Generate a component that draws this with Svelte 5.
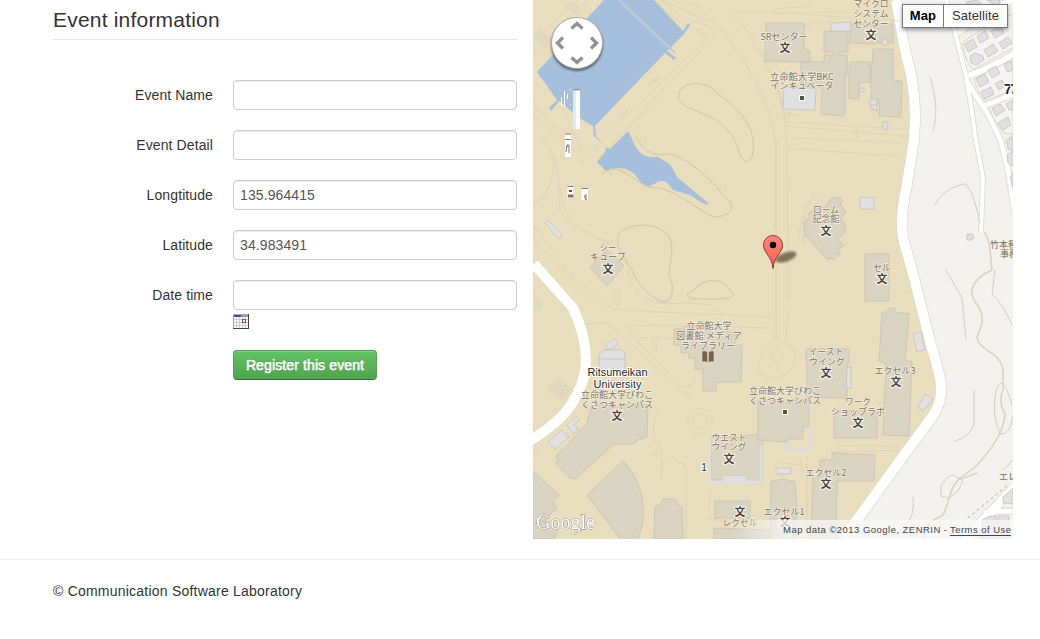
<script>
  const fields = [
    { id: 'name', label: 'Event Name', value: '' },
    { id: 'detail', label: 'Event Detail', value: '' },
    { id: 'lng', label: 'Longtitude', value: '135.964415' },
    { id: 'lat', label: 'Latitude', value: '34.983491' },
    { id: 'date', label: 'Date time', value: '' }
  ];

  // Campus buildings, as polygon point lists
  const halls = [
    '766,23 804,23 804,50 810,50 810,62 765,61 765,37 766,37',
    '824,31 848,31 848,52 838,52 838,55 847,55 847,72 845,74 845,113 843,116 821,114 822,87 801,85 801,62 824,62 824,55 833,55 833,52 824,52',
    '850,24 893,24 893,43 878,43 878,40 876,44 850,43',
    '850,62 870,62 870,82 859,83 859,96 856,99 849,98 849,76 846,74 846,69 850,69',
    '873,49 893,49 893,80 902,81 901,117 879,116 880,104 871,99 871,77',
    '831,199 834,197 837,199 840,197 843,200 840,203 846,213 841,219 845,223 845,232 838,239 844,245 838,250 840,253 834,260 831,258 828,260 805,235 804,222 810,217 808,214 815,209 825,207',
    '865,254 889,254 889,301 865,301',
    '882,312 888,312 888,308 895,308 895,312 909,314 905,361 912,361 909,436 883,435 886,363 879,361',
    '806,349 849,349 849,363 847,363 847,398 807,397 807,363 806,363',
    '674,329 684,329 684,326 727,326 727,332 735,332 735,345 742,345 741,382 716,382 716,391 703,391 703,369 695,369 695,358 689,358 689,353 681,353 681,345 674,345',
    '590,267 607,250 624,266 607,286',
    '592,405 648,405 647,437 638,440 633,444 614,444 575,479 570,478 569,477 555,463 558,460 556,456 588,423 588,419',
    '587,495 623,461 Q646,485 643,520 Q642,533 635,544 L625,545Z',
    '533,471 559,495 553,502 557,508 547,518 533,529',
    '654,539 655,507 662,503 663,499 675,499 676,503 682,507 683,539',
    '715,501 750,501 750,518 715,518',
    '714,528 769,530 769,539 714,539',
    '771,481 784,479 795,482 797,508 794,539 770,539',
    '820,460 832,460 832,453 875,455 874,481 837,481 836,539 811,539 813,478 820,478',
    '711,436 732,436 732,439 749,435 762,435 762,483 747,482 747,476 726,476 726,480 711,480',
    '758,400 809,400 809,426 803,427 803,439 787,439 787,442 758,440',
    '834,410 877,410 877,438 834,438',
    '533,525 545,520 558,530 554,539 533,539'
  ];
  const sheds = [
    '831,23 851,22 851,31 831,31',
    '784,87 816,88 815,110 783,109',
    '860,197 874,198 874,209 860,209',
    '913,334 921,332 925,350 917,352',
    '925,394 933,399 923,411 918,407',
    '847,367 851,367 851,388 846,388',
    '548,442 562,430 569,437 555,449',
    '567,425 577,416 579,420 573,425 579,429 574,433 571,430',
    '545,223 548,220 562,235 559,239',
    '882,39 886,39 888,43 886,46 882,45',
    '859,88 864,88 864,92 859,92',
    '871,103 877,105 877,111 871,109',
    '883,122 888,122 887,130 883,129',
    '776,468 791,468 791,474 776,474',
    '967,234 972,234 974,237 972,240 967,240'
  ];
  const houses = [
    '964,44 973,39 977,47 968,52', '977,36 985,31 989,38 980,43', '991,31 1001,27 1004,33 995,38',
    '970,56 975,53 983,56 984,60 976,65 971,63', '984,50 993,44 998,51 988,57', '999,43 1008,37 1012,43 1003,49',
    '976,79 985,74 989,82 980,87', '988,70 996,66 1000,73 992,78', '1004,64 1011,61 1013,64 1013,70 1007,72',
    '981,92 991,87 994,94 985,99', '995,84 1002,80 1005,86 999,90', '992,108 1000,104 1005,110 996,116',
    '998,123 1008,117 1011,125 1003,130', '1006,104 1013,100 1013,110 1009,110', '1007,142 1010,138 1013,137 1013,151 1008,149',
    '1007,155 1013,151 1013,166 1008,163', '966,2 977,0 981,3 970,8', '987,0 1000,0 998,7', '1010,177 1013,174 1013,188',
    '1003,497 1013,488 1013,504 1003,503', '982,520 990,516 996,516 996,539 982,539', '998,516 1009,516 1009,539 998,539'
  ];
  // Street centre lines east of the campus: [path, width]
  const streets = [
    ['M946,0 L954,28 L966,76 L972,112 L975,135 L983,178 L981,232', 4],
    ['M966,80 L989,116 L1001,141 L1008,170 L1015,215', 5],
    ['M968,76 Q990,68 1014,54 M957,33 L1014,-2', 6],
    ['M984,106 L1014,94', 5],
    ['M961,544 L984,519 L1015,487', 9],
    ['M984,513 Q992,511 1014,511', 5]
  ];
  // Street outlines and footpaths inside the campus
  const lanes = [
    'M657,0 C677,30 704,29 703,34 L706,39 L584,158',
    'M663,0 C680,22 708,24 712,29 L716,34 L599,158 L612,176',
    'M690,0 L714,23 L660,0 M675,0 L709,28 M686,0 L707,20',
    'M533,43 L577,0 M533,55 L588,0 M545,61 L562,43',
    'M718,27 C740,50 780,110 775,160 L775,230',
    'M731,12 L748,32 C770,67 785,96 787,145 L788,300',
    'M731,12 L768,12 L855,18 M773,9 L810,6 M773,13 L850,12',
    'M533,103 L584,163 M533,116 L560,138 M563,108 L583,155',
    'M540,135 L557,166 L560,210 C575,235 604,240 616,247 C632,257 624,280 640,294 C653,310 680,300 711,305 L724,315',
    'M550,145 C561,180 544,195 533,207 M555,155 L562,200 C568,225 588,233 610,243',
    'M533,239 L595,300 M533,225 L555,253 M584,285 L614,310 L770,317',
    'M580,325 L607,322 L690,399 M625,327 L681,387 Q693,386 697,382 M626,325 L773,328',
    'M614,290 Q620,300 609,308 M618,288 Q624,300 614,310 M640,338 L680,338 M652,340 L652,350 M656,340 L656,351',
    'M776,140 L776,340 M789,153 Q787,149 795,149 L900,156 L905,161 M790,138 L900,143 M856,126 L856,140 M787,122 L905,129',
    'M797,245 C802,230 798,210 819,191 M804,245 L803,218 L815,208 M768,350 C755,360 755,373 770,379',
    'M784,340 C802,349 797,377 775,377 M788,310 L786,340',
    'M662,447 L661,480 M662,471 L662,463 L672,457 L686,466 L686,539 M653,442 L661,440 L654,456 M710,490 L709,519 L724,521',
    'M834,445 L900,447 M834,452 L899,450 M800,457 L803,480 M807,456 L807,539 M776,462 L801,465 M533,450 L540,455',
    'M775,75 L785,113 L800,115 M785,126 L908,136 M873,17 L898,21 M830,32 L890,32 M790,28 L832,20',
    'M634,420 L641,440 M658,410 Q650,430 655,440'
  ];
  const trees = [
    'M680,90 C688,80 710,82 718,94 C735,107 760,127 752,157 Q747,168 740,155 C735,135 725,122 705,115 C690,107 673,105 680,90Z',
    'M618,235 C625,224 649,222 662,230 C678,241 670,255 669,275 C675,287 673,302 663,302 C651,298 638,285 633,272 L618,246Z',
    'M688,294 L702,283 Q720,275 730,290 Q740,298 720,299 L697,299 Q685,298 688,294Z',
    'M635,135 C645,154 655,156 670,154 C690,158 712,182 731,203 Q735,216 714,217 C694,209 675,187 649,187 C629,178 617,160 602,174'
  ];
  const trails = [
    'M930,77 C936,97 938,115 933,130',
    'M935,205 C942,190 959,184 966,184 C975,196 977,212 980,223',
    'M946,270 L962,298 L966,340',
    'M995,270 L992,294 Q1003,304 1012,325',
    'M974,390 L974,425 Q968,438 955,441',
    'M913,497 C915,512 910,524 900,531',
    'M1003,470 L1013,460',
    'M1012,405 Q1002,370 996,391 Q991,415 1000,434 Q1010,436 1013,415',
    'M941,486 Q947,475 954,475 L963,481 L958,491 L949,498 L941,496 Z'
  ];
  const contours = [
    'M992,270 C970,280 970,292 974,300 C988,318 981,326 977,337 C979,352 1000,350 1003,370 L1003,390 Q998,400 1005,415 C1003,435 988,454 974,468 L960,478 C948,490 951,499 943,515 L930,522 L922,539',
    'M984,232 Q988,235 990,250 L992,270 M961,479 L977,473'
  ];

  const labels = [
    ['マイクロ', 871, 7, 35], ['システム', 871, 17, 35], ['センター', 871, 27, 35],
    ['SRセンター', 784, 40, 47], ['立命館大学BKC', 802, 80, 64], ['インキュベータ', 802, 89, 63],
    ['ローム', 826, 213, 26], ['記念館', 826, 222, 27], ['セル', 882, 271, 17],
    ['シー', 608, 251, 17], ['キューブ', 608, 260, 36],
    ['立命館大学', 709, 329, 45], ['図書館 メディア', 709, 339, 66], ['ライブラリー', 708, 349, 54],
    ['イースト', 826, 355, 35], ['ウイング', 827, 365, 36], ['エクセル3', 895, 374, 41],
    ['立命館大学びわこ', 617, 398, 72], ['くさつキャンパス', 617, 408, 72],
    ['立命館大学びわこ', 785, 394, 72], ['くさつキャンパス', 785, 404, 72],
    ['ワーク', 858, 405, 26], ['ショップラボ', 858, 415, 54],
    ['ウエスト', 729, 441, 35], ['ウイング', 729, 450, 35], ['エクセル2', 826, 476, 41],
    ['エクセル1', 784, 515, 41], ['レクセル', 740, 526, 35]
  ];
  const schools = [[785, 48], [871, 35], [826, 231], [882, 279], [608, 269], [826, 373], [896, 382], [617, 416], [858, 423], [729, 459], [826, 484], [785, 522], [740, 512]];
</script>

<main>
  <div class="content">
    <form>
      <h1>Event information</h1>
      {#each fields as f}
        <div class="row">
          <label for={f.id}>{f.label}</label>
          <input id={f.id} value={f.value} />
        </div>
      {/each}
      <div class="after">
        <svg class="calendar" width="16" height="15" viewBox="0 0 16 15" shape-rendering="crispEdges">
          <rect width="16" height="15" fill="#444" />
          <rect width="15" height="14" fill="#aaa" />
          <rect x="1" y="3" width="14" height="11" fill="#fff" />
          <path d="M3.5,3V14M6.5,3V14M9.5,3V14M12.5,3V14M1,5.5H15M1,8.5H15M1,11.5H15" stroke="#ccc" />
          <rect x="1" y="1" width="7" height="2" fill="#4646b0" />
          <rect x="8" y="1" width="7" height="2" fill="#999" />
          <rect x="9.5" y="5.5" width="3" height="3" fill="#fff" stroke="#a84040" />
        </svg>
        <button type="button">Register this event</button>
      </div>
    </form>

    <div class="map">
      <svg width="480" height="539" viewBox="533 0 480 539">
        <defs>
          <pattern id="steps" width="3" height="3" patternUnits="userSpaceOnUse" patternTransform="rotate(40)">
            <rect width="3" height="3" fill="#e6dcc2" /><path d="M0,.5H3" stroke="#d6ccb2" stroke-width=".8" />
          </pattern>
          <linearGradient id="fade"><stop offset="0" stop-color="#f7f7f5" stop-opacity="0" /><stop offset="1" stop-color="#f7f7f5" stop-opacity=".75" /></linearGradient>
          <linearGradient id="pin" x2="0" y2="1"><stop offset="0" stop-color="#ff887c" /><stop offset="1" stop-color="#f75c50" /></linearGradient>
          <filter id="soft" x="-30%" y="-30%" width="160%" height="160%"><feGaussianBlur stdDeviation="1.3" /></filter>
        </defs>
        <rect x="533" width="480" height="539" fill="#e8ddbd" />
        <path d="M896,0 L904,45 L911,75 Q915,95 915,120 L914,140 L906,190 Q900,215 903,238 L912,270 L931,345 Q942,380 941,390 Q941,403 934,414 L843,539 H1013 V0Z" fill="#f3f2ee" />
        <path class="edge" d="M896,0 L904,45 L911,75 Q915,95 915,120 L914,140 L906,190 Q900,215 903,238 L912,270 L931,345 Q942,380 941,390 Q941,403 934,414 L843,539" stroke-width="11.5" />
        <path class="road" d="M896,0 L904,45 L911,75 Q915,95 915,120 L914,140 L906,190 Q900,215 903,238 L912,270 L931,345 Q942,380 941,390 Q941,403 934,414 L843,539" stroke-width="10" />

        <path d="M962,44 Q963,40 1001,19 L1013,14 V48 L974,69 Q968,68 962,44Z M974,79 L1001,65 L1013,58 V90 L985,101 Q978,94 974,79Z M989,106 L1013,97 V134 L1004,133 Q992,120 989,106Z M1013,135 Q1004,139 1004,148 L1006,166 H1013Z M1013,171 Q1008,180 1013,197Z M996,504 L1013,490 V508 H996Z M980,539 V519 Q984,514 1013,514" fill="#f5f4f0" stroke="#ddd8c9" />
        {#each streets as [d, w]}<path class="edge" {d} stroke-width={w + 1.6} />{/each}
        {#each streets as [d, w]}<path class="road" {d} stroke-width={w} />{/each}
        <path d="M963,522 L1008,485" stroke="#aaa" stroke-dasharray="3 3" fill="none" />
        <g class="shed">{#each houses as p}<polygon points={p} />{/each}</g>
        <g class="contour">{#each contours as d}<path {d} />{/each}</g>
        <g class="trail">{#each trails as d}<path {d} />{/each}</g>

        <g class="lane">{#each lanes as d}<path {d} /> {/each}</g>
        <circle cx="700" cy="421" r="12.5" class="ring" /><circle cx="700" cy="421" r="7.5" class="ring" /><circle cx="777" cy="357" r="5.5" class="ring" />
        <path d="M564,7 L572,0 L584,11 L578,16Z M533,37 L540,29 L552,40 L544,50Z M546,389 L556,377 L573,390 L562,401Z M533,290 L544,304 L540,311 L533,304Z M616,117 L625,109 L629,112 L620,120Z M647,85 L656,77 L659,80 L650,87Z" fill="url(#steps)" />
        <path d="M604,0 H654 L683,31 L688,23 L690,25 L684,34 L667,51 L676,58 L674,60 L665,53 L595,126 L596,137 L601,141 L598,140 L594,136 L593,126 L581,119 L559,101 L551,111 L549,108 L557,100 L537,72Z" fill="#a5bfdd" />
        <path d="M619,0 L675,53" stroke="#c8cdd0" stroke-width="2.4" /><path d="M620,0 L676,53" stroke="#b9c4ce" stroke-width=".8" />
        <path d="M597,162 L606,151 L605,147 L610,149 L628,131 L632,139 Q638,155 649,157 L658,157 L668,163 Q672,166 677,177 L708,203 L707,205 Q698,201 690,195 L673,190 Q666,178 658,182 L650,186 Q643,187 640,181 Q628,162 606,171Z" fill="#a5bfdd" />
        <g class="trees">{#each trees as d}<path {d} />{/each}</g>
        <path class="road" d="M534,264 L573,308 Q586,336 586,360 Q586,382 571,405 Q558,424 528,442" stroke-width="10" />
        <g class="hall">{#each halls as p}<path d={'M' + p + (p.endsWith('Z') ? '' : 'Z')} />{/each}</g>
        <g class="shed">{#each sheds as p}<polygon points={p} />{/each}</g>
        <path d="M710,437 V482 H761 V445" fill="none" stroke="#dedee2" stroke-width="2" />
        <path d="M723,476 H747 V484 H738 V481 H733 V484 H723Z" fill="#dedee2" />
        <path d="M810,405 V411 M810,427 V449 H785 V445 H789" fill="none" stroke="#dcdce0" stroke-width="2.5" />
        <path d="M870,99 H877 V105 H870Z M871,109 H874 M859,96 V100" fill="#e0dfdf" stroke="#c7c4bb" />
        <g class="shed"><path d="M599,372 V354 L604,350 H622 L625,353 V372Z M599,359 H625" /><path d="M606,350 Q605,342 615,339 Q620,341 614,348Z" /></g>

        <g class="jp">
          {#each labels as [text, x, y, w]}<text {x} {y} textLength={w} lengthAdjust="spacingAndGlyphs">{text}</text>{/each}
          <text x="990" y="248" style:text-anchor="start">竹本種</text>
          <text x="1000" y="257" style:text-anchor="start">事務</text>
          <text x="999" y="480" style:text-anchor="start">エレ</text>
        </g>
        <g class="school">{#each schools as [x, y]}<text {x} y={y + 4}>文</text>{/each}</g>
        <g fill="#60503e" stroke="#fff" stroke-width="1"><rect x="799.5" y="95.5" width="5" height="5" /><rect x="782.5" y="409.5" width="5" height="5" /></g>
        <path d="M702,351 Q706,350 707.6,352.5 V363 Q706,361 702,362Z M714,351 Q710,350 708.4,352.5 V363 Q710,361 714,362Z" fill="#75614e" stroke="#f2eee2" stroke-width=".5" />
        <g class="latin">
          <text x="617.5" y="376" textLength="60">Ritsumeikan</text>
          <text x="617.5" y="388" textLength="48">University</text>
          <text x="704" y="470.5" font-size="10">1</text>
          <text x="1011" y="94" font-size="14" font-weight="bold" textLength="14">77</text>
        </g>

        <ellipse cx="786" cy="257" rx="11" ry="4.5" transform="rotate(-20 786 257)" fill="#443c28" opacity=".65" filter="url(#soft)" />
        <path d="M773,268.5 C772,256 763.5,253 763.5,245 A9.3,9.3 0 0 1 782.5,245 C782.5,253 774,256 773,268.5Z" fill="url(#pin)" stroke="#883a32" />
        <circle cx="773" cy="245" r="3.2" />

        <path d="M573,90H580V129H573Z M565,134H571V157H565Z M567.5,186.5H573.5V198H567.5Z M581.5,188.5H588V200H581.5Z" fill="#fff" />
        <path d="M573,90H576V129H573Z" fill="#dcebfa" />
        <path d="M573,89.8H580M565,134H571M565,139.5H571M567.5,186.5H573.5M581.5,188.5H588" stroke="#888272" />
        <path d="M561.5,97V106M564.5,91V107M567.5,94V99M570.5,89V90M570.5,104V105" stroke="#fff" />
        <path d="M566,152 L567,145 H569 V153 M568,145 L566,148 M584,195 L586,200 V194" fill="none" stroke="#777" />
        <path d="M569,191H572" stroke="#555" stroke-width="2" /><path d="M568,196H573.5" stroke="#777" stroke-width="3" />

        <circle cx="577" cy="45" r="26" fill="#333" opacity=".65" filter="url(#soft)" />
        <circle cx="577" cy="43" r="25.5" fill="#fff" stroke="#a9a9a9" />
        <path d="M571.5,28.5 L577,23.5 L582.5,28.5 M571.5,57.5 L577,62.5 L582.5,57.5 M563,37.5 L557.5,43 L563,48.5 M591,37.5 L596.5,43 L591,48.5" fill="none" stroke="#929292" stroke-width="3.4" />

        <text x="536" y="529" class="logo" textLength="59" lengthAdjust="spacingAndGlyphs">Google</text>
        <rect x="733" y="520" width="50" height="19" fill="url(#fade)" /><rect x="783" y="520" width="230" height="19" fill="#f7f7f5" opacity=".75" />
        <text x="783" y="533" class="credit" textLength="164">Map data ©2013 Google, ZENRIN -</text>
        <text x="950" y="533" class="credit" textLength="61">Terms of Use</text>
        <path d="M950,535.5H1011" stroke="#444" />
      </svg>
      <div class="types"><span class="on">Map</span><span>Satellite</span></div>
    </div>
  </div>
  <footer>© Communication Software Laboratory</footer>
</main>

<style>
  :global(body) { margin: 0; background: #fff; overflow: hidden; }
  main { width: 1040px; height: 639px; font: 14px/20px "Liberation Sans", Arial, sans-serif; color: #333; }
  .content { display: flex; gap: 16px; padding-left: 53px; height: 559px; box-sizing: border-box; }
  form { width: 464px; }
  h1 { font-size: 21px; font-weight: 400; line-height: 39px; height: 39px; margin: 0 0 40px; border-bottom: 1px solid #e5e5e5; letter-spacing: .2px; }
  .row { display: flex; gap: 20px; height: 30px; margin-bottom: 20px; }
  .row:nth-of-type(5) { margin-bottom: 4px; }
  label { width: 160px; text-align: right; line-height: 30px; letter-spacing: .1px; }
  input { width: 284px; height: 30px; box-sizing: border-box; padding: 4px 6px; border: 1px solid #ccc; border-radius: 4px; background: #fff; color: #555; font: inherit; letter-spacing: .1px; box-shadow: inset 0 1px 1px rgba(0, 0, 0, .075); outline: 0; }
  .after { padding-left: 180px; display: flex; flex-direction: column; align-items: flex-start; gap: 21px; }
  .calendar { display: block; }
  button { width: 144px; height: 30px; padding: 0; border: 1px solid; border-color: #51a351 #51a351 #387038; border-radius: 4px; background: linear-gradient(#62c462, #51a351); box-shadow: inset 0 1px 0 rgba(255, 255, 255, .2); color: #fff; font: 14px/20px "Liberation Sans", Arial, sans-serif; letter-spacing: .12px; -webkit-text-stroke: .5px #fff; text-shadow: 0 -1px 0 rgba(0, 0, 0, .25); }
  .map { position: relative; width: 480px; height: 539px; overflow: hidden; }
  .map > svg { display: block; }
  .types { position: absolute; top: 4px; left: 369px; display: flex; width: 106px; height: 24px; box-sizing: border-box; border: 1px solid #717b87; background: #fff; box-shadow: 0 2px 4px rgba(0, 0, 0, .4); font-size: 13px; line-height: 22px; color: #333; }
  .types span { flex: 1; text-align: center; letter-spacing: .1px; }
  .types .on { flex: 0 0 40px; border-right: 1px solid #717b87; font-weight: 700; color: #000; }
  footer { border-top: 1px solid #eee; padding: 21px 53px; letter-spacing: .22px; }

  .road { fill: none; stroke: #fff; stroke-linejoin: round; }
  .edge { fill: none; stroke: #dedace; stroke-linejoin: round; }
  .hall { fill: #dad5c3; stroke: #c6c2b4; stroke-width: .8; }
  .shed { fill: #e0e0e2; stroke: #c4c2bd; stroke-width: .8; }
  .lane, .ring { fill: none; stroke: #dad2ba; stroke-width: .8; }
  .trees { fill: none; stroke: #cbc6b0; stroke-width: 1; }
  .trail { fill: none; stroke: #cfcfcc; stroke-width: 1; }
  .contour { fill: none; stroke: #d5d2c7; stroke-width: 1.5; }
  .jp text { font: 9px "Noto Sans CJK JP", sans-serif; text-anchor: middle; fill: #7c6e60; stroke: #f5f0df; stroke-width: 1.4px; paint-order: stroke; }
  .school text { font: 700 11px "Noto Sans CJK JP", sans-serif; text-anchor: middle; fill: #514537; stroke: #fff; stroke-width: 1.8px; paint-order: stroke; }
  .latin { font-family: "Liberation Sans", Arial, sans-serif; font-size: 11px; text-anchor: middle; fill: #222; stroke: #fff; stroke-width: 2px; paint-order: stroke; }
  .logo { font: 20.5px "Liberation Serif", serif; fill: #fff; stroke: #fff; stroke-width: .3px; filter: drop-shadow(.6px .8px .5px #555) drop-shadow(0 0 .6px #777); }
  .credit { font: 9.5px "Liberation Sans", Arial, sans-serif; fill: #444; }
</style>
